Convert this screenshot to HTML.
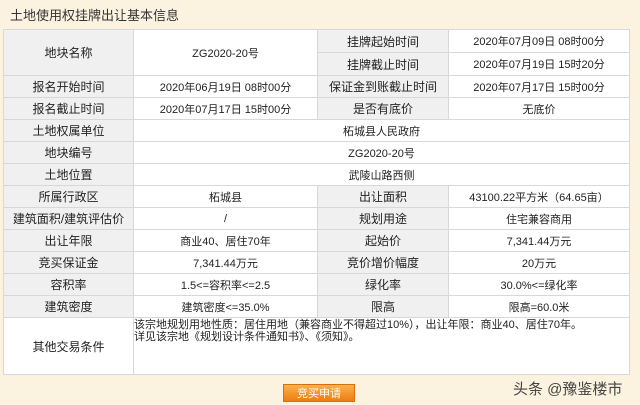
<!DOCTYPE html>
<html><head><meta charset="utf-8"><style>
body{margin:0;width:640px;height:405px;background:#fbf3e0;font-family:"Liberation Sans","Noto Sans CJK SC",sans-serif;position:relative;overflow:hidden;color:#222}
.t{position:absolute;left:10px;top:5px;font-size:13px;color:#333}
table{position:absolute;left:3px;top:29px;border-collapse:collapse;width:626px;table-layout:fixed;font-size:11px}
td{border:1px solid #d8d8d8;text-align:center;height:21px;padding:0;background:#fff;white-space:nowrap}
td.l{background:#f0f0f0;font-size:12px}
.o{text-align:left;vertical-align:top;padding:1px 0 0 0;line-height:12px;font-size:11px;white-space:normal}
.btn{position:absolute;left:283px;top:384px;width:72px;height:18px;background:linear-gradient(#fbb04a,#ee7d12);border:1px solid #d57010;color:#fff;font-size:11px;text-align:center;line-height:18px;box-sizing:border-box}
.wm{position:absolute;left:513px;top:378px;font-size:15px;color:#444}
</style></head><body>
<div class="t">土地使用权挂牌出让基本信息</div>
<table>
<colgroup><col style="width:130px"><col style="width:184px"><col style="width:131px"><col style="width:181px"></colgroup>
<tr><td class="l" rowspan="2" style="height:45px">地块名称</td><td rowspan="2">ZG2020-20号</td><td class="l">挂牌起始时间</td><td>2020年07月09日 08时00分</td></tr>
<tr><td class="l">挂牌截止时间</td><td>2020年07月19日 15时20分</td></tr>
<tr><td class="l">报名开始时间</td><td>2020年06月19日 08时00分</td><td class="l">保证金到账截止时间</td><td>2020年07月17日 15时00分</td></tr>
<tr><td class="l">报名截止时间</td><td>2020年07月17日 15时00分</td><td class="l">是否有底价</td><td>无底价</td></tr>
<tr><td class="l">土地权属单位</td><td colspan="3">柘城县人民政府</td></tr>
<tr><td class="l">地块编号</td><td colspan="3">ZG2020-20号</td></tr>
<tr><td class="l">土地位置</td><td colspan="3">武陵山路西侧</td></tr>
<tr><td class="l">所属行政区</td><td>柘城县</td><td class="l">出让面积</td><td>43100.22平方米（64.65亩）</td></tr>
<tr><td class="l">建筑面积/建筑评估价</td><td>/</td><td class="l">规划用途</td><td>住宅兼容商用</td></tr>
<tr><td class="l">出让年限</td><td>商业40、居住70年</td><td class="l">起始价</td><td>7,341.44万元</td></tr>
<tr><td class="l">竞买保证金</td><td>7,341.44万元</td><td class="l">竞价增价幅度</td><td>20万元</td></tr>
<tr><td class="l">容积率</td><td>1.5&lt;=容积率&lt;=2.5</td><td class="l">绿化率</td><td>30.0%&lt;=绿化率</td></tr>
<tr><td class="l" style="height:19px">建筑密度</td><td>建筑密度&lt;=35.0%</td><td class="l">限高</td><td>限高=60.0米</td></tr>
<tr><td class="l" style="background:#fff;height:56px">其他交易条件</td><td colspan="3" class="o">该宗地规划用地性质：居住用地（兼容商业不得超过10%），出让年限：商业40、居住70年。<br>详见该宗地《规划设计条件通知书》、《须知》。</td></tr>
</table>
<div class="btn">竞买申请</div>
<div class="wm">头条 @豫鉴楼市</div>
</body></html>
